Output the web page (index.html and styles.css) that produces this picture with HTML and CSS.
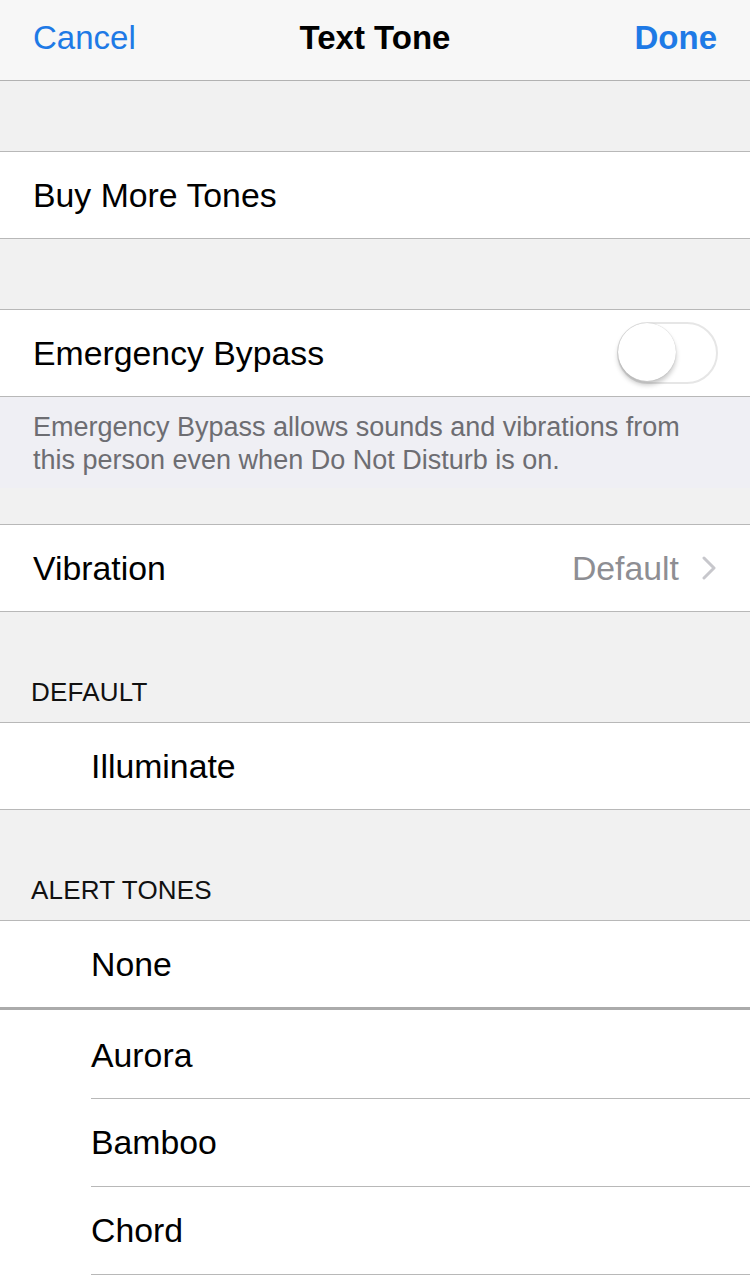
FILE: index.html
```html
<!DOCTYPE html>
<html>
<head>
<meta charset="utf-8">
<link rel="stylesheet" href="styles.css">
</head>
<body>
<div class="screen">
  <header class="nav">
    <span class="nav-btn">Cancel</span>
    <span class="nav-title">Text Tone</span>
    <span class="nav-btn nav-done">Done</span>
  </header>

  <div class="gap gap-70"></div>
  <div class="group">
    <div class="row"><span class="label">Buy More Tones</span></div>
  </div>

  <div class="gap gap-70"></div>
  <div class="group">
    <div class="row">
      <span class="label">Emergency Bypass</span>
      <span class="toggle"><span class="knob"></span></span>
    </div>
  </div>
  <div class="footer">Emergency Bypass allows sounds and vibrations from this person even when Do Not Disturb is on.</div>

  <div class="gap gap-36"></div>
  <div class="group">
    <div class="row">
      <span class="label">Vibration</span>
      <span class="detail">Default
        <svg class="chev" width="14" height="24" viewBox="0 0 14 24"><path d="M2 2 L12 12 L2 22" fill="none" stroke="#c7c7cc" stroke-width="3" stroke-linecap="round" stroke-linejoin="round"/></svg>
      </span>
    </div>
  </div>

  <div class="gap gap-header"><span class="section-title">DEFAULT</span></div>
  <div class="group">
    <div class="row indent"><span class="label">Illuminate</span></div>
  </div>

  <div class="gap gap-header"><span class="section-title">ALERT TONES</span></div>
  <div class="group open-bottom">
    <div class="row indent row-thick"><span class="label">None</span></div>
    <div class="row row-inset tall"><span class="label">Aurora</span></div>
    <div class="row row-inset"><span class="label">Bamboo</span></div>
    <div class="row row-inset"><span class="label">Chord</span></div>
  </div>
</div>
</body>
</html>
```

FILE: styles.css
```css
* { box-sizing: border-box; }
html, body { margin: 0; padding: 0; background: #ffffff; }
body {
  font-family: "Liberation Sans", Arial, sans-serif;
  color: #000;
}
.screen {
  width: 750px;
  height: 1287px;
  overflow: hidden;
  background: #ffffff;
}
.nav {
  height: 81px;
  background: #f7f7f7;
  border-bottom: 1px solid #b2b2b2;
  display: flex;
  align-items: center;
  justify-content: space-between;
  padding: 0 33px 5px 33px;
  position: relative;
}
.nav-btn {
  font-size: 33px;
  color: #1e7ae6;
}
.nav-done { font-weight: bold; }
.nav-title {
  position: absolute;
  left: 0;
  right: 0;
  text-align: center;
  font-size: 33px;
  font-weight: bold;
  pointer-events: none;
}
.gap { background: #f1f1f1; }
.gap-70 { height: 70px; }
.gap-36 { height: 36px; }
.gap-header {
  height: 110px;
  display: flex;
  align-items: flex-end;
  padding: 0 0 14px 31px;
}
.section-title {
  font-size: 26px;
  color: #111;
  letter-spacing: 0.2px;
}
.group {
  background: #fff;
  border-top: 1px solid #b8b8b8;
  border-bottom: 1px solid #b8b8b8;
}
.group.open-bottom { border-bottom: none; }
.row {
  height: 86px;
  display: flex;
  align-items: center;
  justify-content: space-between;
  padding: 0 33px;
}
.row.indent { padding-left: 91px; }
.row-thick {
  height: 89px;
  border-bottom: 3px solid #ababab;
}
.row.row-inset {
  height: 88px;
  padding-left: 0;
  margin-left: 91px;
  border-bottom: 1px solid #b8b8b8;
}
.row.row-inset.tall { height: 89px; padding-top: 3px; }
.label { font-size: 33.8px; }
.detail {
  font-size: 33.8px;
  color: #8e8e93;
  display: flex;
  align-items: center;
  gap: 23px;
  margin-right: 1px;
}
.toggle {
  width: 101px;
  height: 62px;
  border-radius: 31px;
  border: 2px solid #e6e6e6;
  background: #fff;
  position: relative;
  margin-right: -1px;
}
.knob {
  position: absolute;
  left: -1px;
  top: -1px;
  width: 58px;
  height: 58px;
  border-radius: 50%;
  background: #fff;
  box-shadow: 0 4px 5px rgba(0,0,0,0.22), 0 0 1px rgba(0,0,0,0.25);
}
.footer {
  background: #efeff4;
  height: 91px;
  padding: 14px 33px 0 33px;
  font-size: 27px;
  line-height: 33px;
  color: #6d6d72;
}
```
